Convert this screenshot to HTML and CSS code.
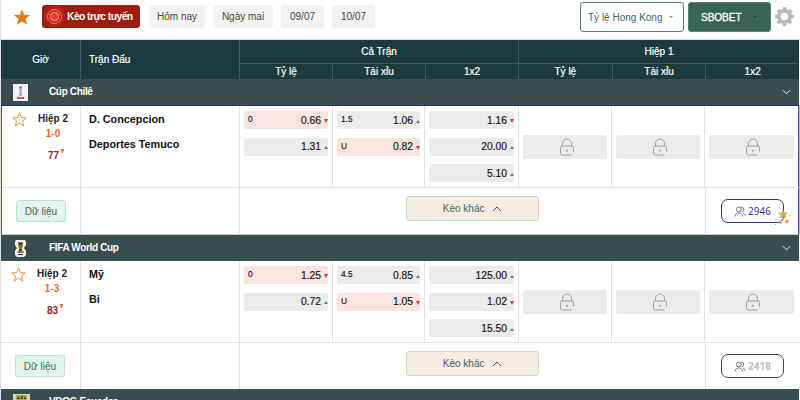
FILE: index.html
```
<!DOCTYPE html>
<html lang="vi">
<head>
  <meta charset="UTF-8">
  <meta name="viewport" content="width=device-width, initial-scale=1.0">
  <title>Kèo trực tuyến</title>
  <link rel="stylesheet" href="styles.css">
</head>
<body>
  <!-- shared icons -->
  <svg class="sprite">
    <symbol id="star" viewBox="0 0 16 16"><path d="M8 1l2 4.9 5.2.4-4 3.4 1.3 5.1L8 12l-4.500 2.800 1.300-5.100-4-3.400L6 5.900z"/></symbol>
    <symbol id="chevron" viewBox="0 0 10 6"><path d="M1 1l4 4 4-4" fill="none" stroke="currentColor"/></symbol>
    <symbol id="lock" viewBox="0 0 16 18">
      <path d="M3.500 8V5.500a4.500 4.500 0 0 1 9 0V8M14.500 13.500V9.500a1.500 1.500 0 0 0-1.500-1.500H3A1.500 1.500 0 0 0 1.500 9.500v5.500a2 2 0 0 0 2 2H12.500" fill="none" stroke="currentColor"/>
      <circle cx="8" cy="12.700" r="1" fill="currentColor"/>
    </symbol>
    <symbol id="users" viewBox="0 0 12 11">
      <g fill="none" stroke="currentColor">
        <circle cx="4.800" cy="3.500" r="2.400"/>
        <path d="M1 10.500C1 5.800 8.600 5.800 8.600 10.500M7 1.200c3.500-.8 3.600 4.300.6 4.600M9 7c1.500.5 2.200 1.700 2.200 3.200"/>
      </g>
    </symbol>
  </svg>

  <div class="page">
    <div class="toolbar">
      <svg class="fav-icon"><use href="#star"/></svg>
      <button class="tab tab-live"><span class="live-dot"></span>Kèo trực tuyến</button>
      <button class="tab tab-today">Hôm nay</button>
      <button class="tab tab-tomorrow">Ngày mai</button>
      <button class="tab tab-date">09/07</button>
      <button class="tab tab-date">10/07</button>
      <div class="toolbar-right">
        <button class="select select-odds">Tỷ lệ Hong Kong <i class="caret"></i></button>
        <button class="select select-book">SBOBET <i class="caret"></i></button>
        <svg class="gear" viewBox="0 0 20 20">
          <circle cx="10" cy="10" r="8.700" fill="none" stroke="#b9b9b9" stroke-width="2.400" stroke-dasharray="3.900 2.933" stroke-dashoffset="1.950"/>
          <circle cx="10" cy="10" r="6" fill="none" stroke="#b9b9b9" stroke-width="4"/>
        </svg>
      </div>
    </div>

    <div class="table-head">
      <div class="th th-time">Giờ</div>
      <div class="th th-match">Trận Đấu</div>
      <div class="th-group">
        <div class="th-title">Cả Trận</div>
        <div class="th-cols"><span>Tỷ lệ</span><span>Tài xỉu</span><span>1x2</span></div>
      </div>
      <div class="th-group">
        <div class="th-title">Hiệp 1</div>
        <div class="th-cols"><span>Tỷ lệ</span><span>Tài xỉu</span><span>1x2</span></div>
      </div>
    </div>

    <div class="league">
      <svg class="league-logo" viewBox="0 0 15 17">
        <rect width="15" height="17" fill="#f4f2f3"/>
        <path d="M6 3h3l-.5 4L9 12H6l.7-5z" fill="#a9a6b4"/>
        <circle cx="7.500" cy="3.200" r="1.200" fill="#c66b74"/>
        <path d="M4 13h7v2H4z" fill="#c84d58"/>
      </svg>
      <span>Cúp Chilê</span>
      <svg class="league-arrow"><use href="#chevron"/></svg>
    </div>

    <div class="match active">
      <div class="row odds-row">
        <div class="cell time">
          <svg class="star-line"><use href="#star"/></svg>
          <div class="clock">
            <b>Hiệp 2</b>
            <span class="score">1-0</span>
            <span class="minute">77<i></i></span>
          </div>
        </div>
        <div class="cell teams"><p>D. Concepcion</p><p>Deportes Temuco</p></div>
        <div class="cell odds">
          <div class="odd down"><small>0</small>0.66</div>
          <div class="odd up">1.31</div>
        </div>
        <div class="cell odds">
          <div class="odd up"><small>1.5</small>1.06</div>
          <div class="odd down"><small>U</small>0.82</div>
        </div>
        <div class="cell odds">
          <div class="odd down gray">1.16</div>
          <div class="odd up">20.00</div>
          <div class="odd up">5.10</div>
        </div>
        <div class="cell locked"><div><svg><use href="#lock"/></svg></div></div>
        <div class="cell locked"><div><svg><use href="#lock"/></svg></div></div>
        <div class="cell locked"><div><svg><use href="#lock"/></svg></div></div>
      </div>
      <div class="row foot-row">
        <div class="cell"><button class="data-btn">Dữ liệu</button></div>
        <div class="cell"></div>
        <div class="cell more"><button class="more-btn">Kèo khác <svg><use href="#chevron"/></svg></button></div>
        <div class="cell viewers">
          <button class="view-btn"><svg class="users"><use href="#users"/></svg>2946
            <svg class="sparkle" viewBox="0 0 18 18">
              <path d="M9 1l1.300 2.700 3 .4-2.200 2 .6 3L9 7.600 6.300 9.100l.6-3-2.200-2 3-.4z" fill="#dfb62f" stroke="#a9842a" stroke-width=".4"/>
              <path d="M13 10l.8 1.500 1.700.2-1.300 1.100.3 1.700-1.500-.8-1.500.8.3-1.700-1.300-1.100 1.700-.2z" fill="#d9ab2c"/>
              <path d="M6.500 11.500l.6 1.200 1.400.2-1 .9.3 1.400-1.300-.7-1.300.7.3-1.400-1-.9 1.400-.2z" fill="#d2a336"/>
              <path d="M1 10h1v1H1zM15 6h1v1h-1zM1 15h1v1H1z" fill="#b7aa90"/>
            </svg>
          </button>
        </div>
      </div>
    </div>

    <div class="league">
      <svg class="league-logo" viewBox="0 0 15 17">
        <path d="M3 0h9l1 2v3l-2 3 2 3v4l-2 2H4l-2-2v-4l2-3-2-3V2z" fill="#f3f3ef"/>
        <path d="M5 2h5v4L9 8v3h1.500v2h-6v-2H6V8L5 6z" fill="#8f7635"/>
        <path d="M6 3h3v2H6zM6 9h3v2H6zM5 14h5v1H5z" fill="#3e4034"/>
      </svg>
      <span>FIFA World Cup</span>
      <svg class="league-arrow"><use href="#chevron"/></svg>
    </div>

    <div class="match">
      <div class="row odds-row">
        <div class="cell time">
          <svg class="star-line"><use href="#star"/></svg>
          <div class="clock">
            <b>Hiệp 2</b>
            <span class="score">1-3</span>
            <span class="minute">83<i></i></span>
          </div>
        </div>
        <div class="cell teams"><p>Mỹ</p><p>Bỉ</p></div>
        <div class="cell odds">
          <div class="odd down"><small>0</small>1.25</div>
          <div class="odd up">0.72</div>
        </div>
        <div class="cell odds">
          <div class="odd up"><small>4.5</small>0.85</div>
          <div class="odd down"><small>U</small>1.05</div>
        </div>
        <div class="cell odds">
          <div class="odd up">125.00</div>
          <div class="odd down gray">1.02</div>
          <div class="odd up">15.50</div>
        </div>
        <div class="cell locked"><div><svg><use href="#lock"/></svg></div></div>
        <div class="cell locked"><div><svg><use href="#lock"/></svg></div></div>
        <div class="cell locked"><div><svg><use href="#lock"/></svg></div></div>
      </div>
      <div class="row foot-row">
        <div class="cell"><button class="data-btn">Dữ liệu</button></div>
        <div class="cell"></div>
        <div class="cell more"><button class="more-btn">Kèo khác <svg><use href="#chevron"/></svg></button></div>
        <div class="cell viewers">
          <button class="view-btn view-muted"><svg class="users"><use href="#users"/></svg>2418</button>
        </div>
      </div>
    </div>

    <div class="league">
      <svg class="league-logo logo-wide" viewBox="0 0 17 17">
        <rect width="17" height="17" fill="#d9d6b8"/>
        <path d="M3 1h11v12l-5 3-6-3z" fill="#b7a640"/>
        <path d="M4 3h3v2H4zM8 2h2v3H8zM11 3h2v2h-2zM5 7h7v3H5z" fill="#4c5340"/>
      </svg>
      <span>VĐQG Ecuador</span>
      <svg class="league-arrow"><use href="#chevron"/></svg>
    </div>
  </div>
</body>
</html>
```
FILE: styles.css
```
* {
  margin: 0;
  padding: 0;
  box-sizing: border-box;
}

body {
  font-family: "Liberation Sans", Arial, sans-serif;
  font-size: 10px;
  color: #222;
  background: #fff;
  overflow: hidden;
}

button {
  font: inherit;
  cursor: pointer;
}

.sprite {
  position: absolute;
  width: 0;
  height: 0;
}

.page {
  width: 800px;
  height: 400px;
  overflow: hidden;
  border-left: 1px solid #dfe3e8;
}

/* toolbar */
.toolbar {
  display: flex;
  height: 40px;
  padding: 5px 0 0 12px;
  border-bottom: 1px solid #d5dede;
}

.fav-icon {
  width: 18px;
  height: 18px;
  margin: 3px 11px 0 0;
  fill: #d98324;
}

.tab {
  height: 23px;
  border: none;
  border-radius: 3px;
  background: #f2f2f2;
  color: #444;
}

.tab-live {
  display: flex;
  align-items: center;
  width: 98px;
  margin-right: 9px;
  background: #9d1c10;
  color: #fff;
  font-weight: bold;
  font-size: 10.300px;
  letter-spacing: -0.550px;
}

.live-dot {
  width: 15px;
  height: 15px;
  margin: 0 5px 0 5px;
  border: 1px solid #ec8378;
  border-radius: 50%;
  background: radial-gradient(circle, #ee3c2b 0 3.500px, #f08074 3.500px 4.500px, #cb2719 4.500px);
  box-shadow: 0 0 0 3px rgba(225, 50, 35, 0.35);
}

.tab-today {
  width: 56px;
  margin-right: 8px;
}

.tab-tomorrow {
  width: 60px;
  margin-right: 8px;
}

.tab-date {
  width: 43px;
  margin-right: 8px;
}

.tab-date:last-of-type {
  margin-right: 0;
}

.toolbar-right {
  display: flex;
  margin: -3px 6px 0 auto;
}

.select {
  display: flex;
  align-items: center;
  justify-content: space-between;
  height: 30px;
  border: 1px solid #5c8274;
  border-radius: 3px;
}

.caret {
  width: 4px;
  border: 2px solid transparent;
  border-top-color: currentColor;
  border-bottom: 0;
}

.select-odds {
  width: 104px;
  margin-right: 4px;
  padding: 0 10px 0 7px;
  background: #fff;
  color: #43635a;
}

.select-odds .caret {
  color: #7d948d;
}

.select-book {
  width: 83px;
  margin-right: 4px;
  padding: 0 13px 0 12px;
  background: #3a6357;
  color: #fff;
  -webkit-text-stroke: 0.300px #fff;
}

.select-book .caret {
  color: #25483e;
}

.gear {
  width: 19px;
  height: 19px;
  margin-top: 5px;
}

/* table header */
.table-head {
  display: flex;
  width: 798px;
  height: 39px;
  background: #1c3a3e;
  color: #fff;
  -webkit-text-stroke: 0.200px #fff;
}

.th {
  display: flex;
  align-items: center;
  border-right: 1px solid #3e5a5d;
}

.th-time {
  width: 80px;
  justify-content: center;
}

.th-match {
  width: 159px;
  padding-left: 8px;
}

.th-group {
  width: 279px;
  border-right: 1px solid #3e5a5d;
  text-align: center;
}

.th-group:last-child {
  width: 280px;
  border-right: 0;
}

.th-title {
  height: 24px;
  line-height: 23px;
  border-bottom: 1px solid #3e5a5d;
}

.th-cols {
  display: flex;
  height: 15px;
  line-height: 15px;
}

.th-cols span {
  flex: 1;
  border-right: 1px solid #3e5a5d;
}

.th-cols span:last-child {
  border-right: 0;
}

/* league bars */
.league {
  display: flex;
  align-items: center;
  width: 798px;
  height: 26px;
  padding: 0 8px 0 12px;
  background: #3a4e50;
  color: #fff;
  font-weight: bold;
}

.league span {
  margin-top: -1px;
  letter-spacing: -0.350px;
}

.league-logo {
  width: 15px;
  height: 17px;
  margin-right: 21px;
}

.logo-wide {
  width: 17px;
  margin-right: 19px;
}

.league-arrow {
  width: 9px;
  height: 6px;
  margin-left: auto;
}

/* matches */
.match {
  width: 798px;
}

.match.active {
  border: 1px solid #cfcaf0;
  border-top-color: #272868;
  border-left-color: #5149a8;
  border-bottom-color: #bccbd0;
  border-right-color: #5149a8;
  box-shadow: 1px 0 0 #b5aeea;
}

.row {
  display: grid;
}

.odds-row {
  grid-template-columns: 80px 159px 93px 92px 94px 93px 93px 94px;
  height: 82px;
  border-bottom: 1px solid #e1e1e4;
}

.active .odds-row,
.active .foot-row {
  margin-right: -1px;
}

.active .odds-row {
  grid-template-columns: 79px 159px 93px 92px 94px 93px 93px 94px;
}

.foot-row {
  grid-template-columns: 80px 159px 466px 93px;
  height: 46px;
}

.active .foot-row {
  grid-template-columns: 79px 159px 466px 93px;
}

.cell {
  border-right: 1px solid #e1e1e4;
}

.cell:last-child {
  border-right: 0;
}

.time {
  display: flex;
  padding: 6px 0 0 10px;
}

.star-line {
  width: 15px;
  height: 15px;
  margin-right: 11px;
  fill: none;
  stroke: #e58a35;
}

.clock {
  display: flex;
  flex-direction: column;
  align-items: center;
  line-height: 14px;
}

.clock b {
  line-height: 13px;
}

.score {
  color: #e8701f;
  font-weight: bold;
  line-height: 17px;
}

.minute {
  position: relative;
  margin: 7px 0 0 1px;
  color: #9e2020;
  font-weight: bold;
}

.minute i {
  position: absolute;
  top: 0;
  right: -5px;
  width: 3px;
  height: 4px;
  background: #e8661f;
  clip-path: polygon(0 0, 100% 0, 60% 100%, 20% 100%);
}

.teams {
  padding: 7px 0 0 8px;
  color: #111;
  font-size: 10.800px;
  font-weight: bold;
}

.teams p {
  height: 25px;
  line-height: 13px;
}

.odds {
  display: flex;
  flex-direction: column;
  gap: 8.600px;
  padding: 5px 4px;
}

.odd {
  display: flex;
  align-items: center;
  justify-content: flex-end;
  height: 18px;
  border-radius: 2px;
  background: #ebebeb;
  color: #111;
  font-size: 10.300px;
  -webkit-text-stroke: 0.150px #111;
}

.odd small {
  margin: -2px auto 0 4px;
  font-size: 8.300px;
}

.odd::after {
  content: "";
  margin: 2px 0 0 3px;
  border: 2px solid transparent;
}

.odd.up::after {
  border-top: 0;
  border-bottom: 3px solid #4d9a4b;
}

.odd.down {
  background: #f9e4e0;
}

.odd.down::after {
  border-top: 4px solid #d93d35;
  border-bottom: 0;
}

.odd.gray {
  background: #ebebeb;
}

.locked {
  display: flex;
  align-items: center;
  padding: 0 4px;
}

.locked:last-child {
  padding-right: 5px;
}

.locked div {
  display: flex;
  flex: 1;
  align-items: center;
  justify-content: center;
  height: 24px;
  margin-top: 1px;
  border-radius: 2px;
  background: #ebebeb;
  color: #a0a0a0;
}

.locked svg {
  width: 16px;
  height: 18px;
  margin-left: 3px;
}

.data-btn {
  display: block;
  width: 50px;
  height: 22px;
  margin: 12px 0 0 14px;
  border: 1px solid #b4e5cf;
  border-radius: 3px;
  background: #e3f4ec;
  color: #456b60;
}

.more {
  display: flex;
  justify-content: center;
  align-items: flex-start;
  padding-top: 8px;
}

.more-btn {
  width: 133px;
  height: 25px;
  border: 1px solid #b8e3c6;
  border-radius: 3px;
  background: #f7ece2;
  color: #43635a;
}

.more-btn svg {
  width: 10px;
  height: 6px;
  margin-left: 5px;
  transform: rotate(180deg);
}

.viewers {
  padding: 11px 0 0 15px;
}

.view-btn {
  position: relative;
  display: flex;
  align-items: center;
  width: 63px;
  height: 24px;
  padding-left: 12px;
  border: 1px solid #37318c;
  border-radius: 7px;
  background: #fff;
  color: #43379d;
  font-family: "Noto Sans", sans-serif;
}

.users {
  width: 12px;
  height: 11px;
  margin-right: 2px;
  color: #777;
}

.view-muted {
  border-color: #444;
  color: #c0c0c0;
  font-weight: bold;
}

.sparkle {
  position: absolute;
  right: -9px;
  bottom: -5px;
  width: 18px;
  height: 18px;
}
```
